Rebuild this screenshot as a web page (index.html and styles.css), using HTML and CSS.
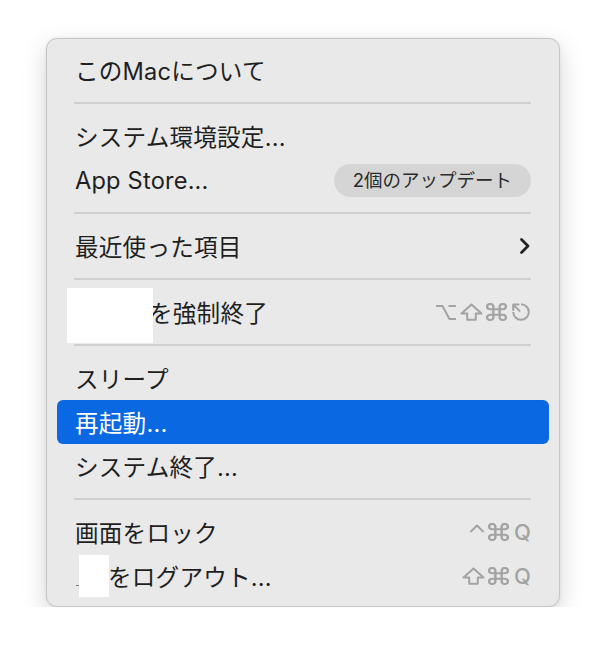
FILE: index.html
```html
<!DOCTYPE html>
<html lang="ja">
<head>
<meta charset="utf-8">
<link rel="stylesheet" href="styles.css">
</head>
<body>
<div class="stage">
  <div class="menu">
    <div class="row"><span class="label">このMacについて</span></div>
    <div class="sep"></div>
    <div class="row"><span class="label">システム環境設定...</span></div>
    <div class="row"><span class="label">App Store...</span><span class="badge">2個のアップデート</span></div>
    <div class="sep"></div>
    <div class="row"><span class="label">最近使った項目</span>
      <svg class="chev" width="12" height="18" viewBox="0 0 12 18"><polyline points="2.5,2.5 9,9 2.5,15.5" fill="none" stroke="#222" stroke-width="2.8" stroke-linecap="round" stroke-linejoin="round"/></svg>
    </div>
    <div class="sep"></div>
    <div class="row"><span class="label"><span class="hidden h1"></span>を強制終了</span>
      <span class="keys">
        <svg width="22" height="17" viewBox="0 0 22 17"><path d="M1 2 H7.5 L14.5 15 H21 M13.5 2 H21" fill="none" stroke="#a3a3a3" stroke-width="2"/></svg>
        <svg width="23" height="18" viewBox="0 0 23 18"><polygon points="11.5,1.4 21.5,10.5 15.8,10.5 15.8,16.8 7.2,16.8 7.2,10.5 1.5,10.5" fill="none" stroke="#a3a3a3" stroke-width="2" stroke-linejoin="round"/></svg>
        <svg width="21" height="18" viewBox="2 2 20 20" preserveAspectRatio="none"><path d="M18 3a3 3 0 0 0-3 3v12a3 3 0 0 0 3 3 3 3 0 0 0 3-3 3 3 0 0 0-3-3H6a3 3 0 0 0-3 3 3 3 0 0 0 3 3 3 3 0 0 0 3-3V6a3 3 0 0 0-3-3 3 3 0 0 0-3 3 3 3 0 0 0 3 3h12a3 3 0 0 0 3-3 3 3 0 0 0-3-3z" fill="none" stroke="#a3a3a3" stroke-width="2.3"/></svg>
        <svg width="21" height="20" viewBox="0 0 21 20"><path d="M11 2.2 A7.8 7.8 0 1 1 3.2 10" fill="none" stroke="#a3a3a3" stroke-width="2"/><path d="M3.2 2.6 L9.5 8.9 M3.2 2.6 H8.5 M3.2 2.6 V7.9" fill="none" stroke="#a3a3a3" stroke-width="2" stroke-linecap="round"/></svg>
      </span>
      <span class="redact r1"></span>
    </div>
    <div class="sep"></div>
    <div class="row"><span class="label">スリープ</span></div>
    <div class="row active"><span class="label">再起動...</span></div>
    <div class="row"><span class="label">システム終了...</span></div>
    <div class="sep"></div>
    <div class="row"><span class="label">画面をロック</span>
      <span class="keys">
        <svg width="16" height="18" viewBox="0 0 16 18"><polyline points="1.5,9 8,2.5 14.5,9" fill="none" stroke="#a3a3a3" stroke-width="2" stroke-linejoin="round"/></svg>
        <svg width="21" height="18" viewBox="2 2 20 20" preserveAspectRatio="none"><path d="M18 3a3 3 0 0 0-3 3v12a3 3 0 0 0 3 3 3 3 0 0 0 3-3 3 3 0 0 0-3-3H6a3 3 0 0 0-3 3 3 3 0 0 0 3 3 3 3 0 0 0 3-3V6a3 3 0 0 0-3-3 3 3 0 0 0-3 3 3 3 0 0 0 3 3h12a3 3 0 0 0 3-3 3 3 0 0 0-3-3z" fill="none" stroke="#a3a3a3" stroke-width="2.3"/></svg>
        <span class="q">Q</span>
      </span>
    </div>
    <div class="row"><span class="label"><span class="hidden h2"><span class="dash"></span></span>をログアウト...</span>
      <span class="keys">
        <svg width="23" height="18" viewBox="0 0 23 18"><polygon points="11.5,1.4 21.5,10.5 15.8,10.5 15.8,16.8 7.2,16.8 7.2,10.5 1.5,10.5" fill="none" stroke="#a3a3a3" stroke-width="2" stroke-linejoin="round"/></svg>
        <svg width="21" height="18" viewBox="2 2 20 20" preserveAspectRatio="none"><path d="M18 3a3 3 0 0 0-3 3v12a3 3 0 0 0 3 3 3 3 0 0 0 3-3 3 3 0 0 0-3-3H6a3 3 0 0 0-3 3 3 3 0 0 0 3 3 3 3 0 0 0 3-3V6a3 3 0 0 0-3-3 3 3 0 0 0-3 3 3 3 0 0 0 3 3h12a3 3 0 0 0 3-3 3 3 0 0 0-3-3z" fill="none" stroke="#a3a3a3" stroke-width="2.3"/></svg>
        <span class="q">Q</span>
      </span>
      <span class="redact r2"></span>
    </div>
  </div>
</div>
</body>
</html>
```
FILE: styles.css
```css
html, body {
  margin: 0;
  padding: 0;
  background: #ffffff;
}
.stage {
  padding: 38px 0 0 46px;
}
.menu {
  box-sizing: border-box;
  width: 514px;
  height: 569px;
  background: #e9e9e9;
  border: 1px solid #c6c6c6;
  border-radius: 11px;
  box-shadow: 0 8px 24px rgba(0, 0, 0, 0.17), 0 0 3px rgba(0, 0, 0, 0.08);
  padding: 9px 10px 9px 10px;
  font-family: Inter, "Noto Sans CJK JP", sans-serif;
  color: #1f1f1f;
}
.row {
  position: relative;
  height: 44px;
  display: flex;
  align-items: center;
  justify-content: space-between;
  padding: 0 18px 0 18px;
  border-radius: 6px;
  font-size: 23.6px;
  letter-spacing: 0.2px;
}
.row.active {
  background: #0a68e2;
  color: #ffffff;
}
.label {
  white-space: nowrap;
  display: flex;
  align-items: center;
}
.hidden {
  display: inline-block;
  position: relative;
  height: 1px;
}
.h1 {
  width: 74px;
}
.h2 {
  width: 33px;
}
.dash {
  position: absolute;
  left: 1px;
  top: 9px;
  width: 4px;
  height: 1px;
  background: #777777;
}
.sep {
  height: 2px;
  background: #cfcfcf;
  margin: 10px 18px 10px 17px;
}
.badge {
  background: #d5d5d5;
  color: #2b2b2b;
  font-size: 18.5px;
  height: 33px;
  line-height: 33px;
  padding: 0 19px;
  border-radius: 17px;
  letter-spacing: 0;
}
.chev {
  margin-right: 0;
}
.keys {
  display: flex;
  align-items: center;
  gap: 3px;
  color: #a3a3a3;
}
.q {
  font-family: Inter, sans-serif;
  font-size: 22px;
  font-weight: 500;
  line-height: 1;
  margin-left: 2px;
}
.redact {
  position: absolute;
  background: #ffffff;
}
.r1 {
  left: 10px;
  top: -2px;
  width: 86px;
  height: 55px;
}
.r2 {
  left: 22px;
  top: 1px;
  width: 30px;
  height: 42px;
}
```
